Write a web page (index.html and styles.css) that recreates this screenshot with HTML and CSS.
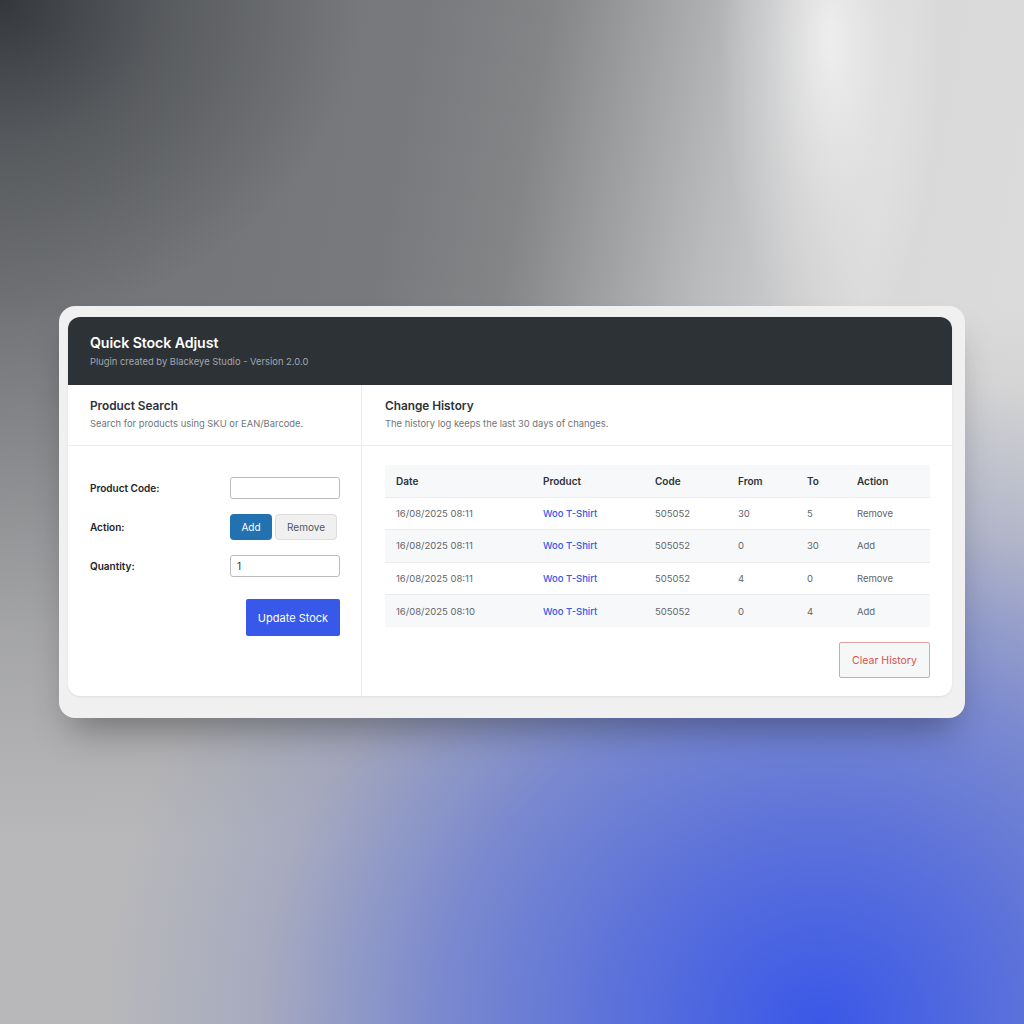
FILE: index.html
```html
<!DOCTYPE html>
<html lang="en">
<head>
<meta charset="utf-8">
<title>Quick Stock Adjust</title>
<link rel="stylesheet" href="styles.css">
</head>
<body>
<div class="page">
  <div class="frame">
    <div class="card">
      <header class="app-header">
        <h1 class="app-title">Quick Stock Adjust</h1>
        <p class="app-sub">Plugin created by Blackeye Studio - Version 2.0.0</p>
      </header>
      <div class="panels">
        <div class="sec-head left">
          <h2 class="sec-title">Product Search</h2>
          <p class="sec-desc">Search for products using SKU or EAN/Barcode.</p>
        </div>
        <div class="sec-head">
          <h2 class="sec-title">Change History</h2>
          <p class="sec-desc">The history log keeps the last 30 days of changes.</p>
        </div>
        <div class="sec-body left">
          <div class="form">
            <label class="lbl">Product Code:</label>
            <input class="inp" type="text" value="">
            <span class="lbl">Action:</span>
            <div class="toggle">
              <button class="btn-add">Add</button>
              <button class="btn-remove">Remove</button>
            </div>
            <label class="lbl">Quantity:</label>
            <input class="inp" type="text" value="1">
          </div>
          <div class="submit-row">
            <button class="btn-update">Update Stock</button>
          </div>
        </div>
        <div class="sec-body right">
          <table class="hist">
            <thead>
              <tr><th class="c-date">Date</th><th class="c-prod">Product</th><th class="c-code">Code</th><th class="c-from">From</th><th class="c-to">To</th><th class="c-act">Action</th></tr>
            </thead>
            <tbody>
              <tr><td>16/08/2025 08:11</td><td><a class="plink">Woo T-Shirt</a></td><td>505052</td><td>30</td><td>5</td><td>Remove</td></tr>
              <tr class="alt"><td>16/08/2025 08:11</td><td><a class="plink">Woo T-Shirt</a></td><td>505052</td><td>0</td><td>30</td><td>Add</td></tr>
              <tr><td>16/08/2025 08:11</td><td><a class="plink">Woo T-Shirt</a></td><td>505052</td><td>4</td><td>0</td><td>Remove</td></tr>
              <tr class="alt"><td>16/08/2025 08:10</td><td><a class="plink">Woo T-Shirt</a></td><td>505052</td><td>0</td><td>4</td><td>Add</td></tr>
            </tbody>
          </table>
          <div class="clear-row">
            <button class="btn-clear">Clear History</button>
          </div>
        </div>
      </div>
    </div>
  </div>
</div>
</body>
</html>
```

FILE: styles.css
```css
* { box-sizing: border-box; }
html, body { margin: 0; padding: 0; }
body {
  font-family: Inter, "Noto Sans", "Liberation Sans", sans-serif;
  width: 1024px;
  height: 1024px;
  overflow: hidden;
}
.page {
  width: 1024px;
  height: 1024px;
  padding: 306px 0 0 59px;
  background:
    radial-gradient(ellipse 720px 660px at 820px 1024px, rgba(58,88,232,1) 0%, rgba(82,106,222,0.95) 25%, rgba(100,120,214,0.75) 52%, rgba(128,140,202,0.3) 78%, rgba(140,145,195,0) 100%),
    radial-gradient(ellipse 110px 320px at 830px 40px, rgba(250,250,250,0.75) 0%, rgba(245,245,245,0.3) 55%, rgba(240,240,240,0) 100%),
    linear-gradient(to bottom, rgba(182,182,184,0) 30%, rgba(182,182,184,0.75) 62%, rgba(184,184,186,1) 82%),
    radial-gradient(ellipse 360px 320px at 0px 0px, rgba(52,56,60,1) 0%, rgba(70,73,77,0.6) 45%, rgba(110,112,115,0) 100%),
    linear-gradient(100deg, #707275 0%, #78797c 35%, #848587 46%, #b9babc 62%, #d9d9d9 76%, #dcdcdc 100%);
}
.frame {
  width: 906px;
  background: #f0f0f0;
  border-radius: 16px;
  padding: 11px 13px 22px 9px;
  box-shadow: 0 22px 36px -12px rgba(0,0,0,0.35);
}
.card {
  background: #ffffff;
  border-radius: 12px;
  overflow: hidden;
  box-shadow: 0 1px 2px rgba(0,0,0,0.08);
}
.app-header {
  background: #2d3237;
  height: 68px;
  padding: 17px 22px 0;
}
.app-title {
  margin: 0;
  color: #ffffff;
  font-size: 14.2px;
  font-weight: 600;
  line-height: 18px;
  letter-spacing: -0.1px;
}
.app-sub {
  margin: 3px 0 0;
  color: #a3a7ab;
  font-size: 9.4px;
  line-height: 13px;
}
.panels {
  display: grid;
  grid-template-columns: 294px 1fr;
}
.left { border-right: 1px solid #ececec; }
.sec-head {
  height: 61px;
  padding: 14px 22px 0;
  border-bottom: 1px solid #ededed;
}
.sec-head:not(.left) { padding-left: 23px; }
.sec-title {
  margin: 0;
  font-size: 11.8px;
  font-weight: 600;
  color: #2c3338;
  line-height: 15px;
}
.sec-desc {
  margin: 3px 0 0;
  font-size: 9.4px;
  color: #70757a;
  line-height: 13px;
}
.sec-body.left {
  padding: 31px 21px 0 22px;
}
.form {
  display: grid;
  grid-template-columns: 140px 110px;
  row-gap: 15px;
  align-items: center;
}
.lbl {
  font-size: 10px;
  font-weight: 600;
  color: #1d2327;
}
.inp {
  width: 110px;
  height: 22px;
  border: 1px solid #b9bcbf;
  border-radius: 3px;
  padding: 0 6px;
  font-family: inherit;
  font-size: 10px;
  color: #2c3338;
  background: #fff;
}
.toggle {
  display: flex;
  gap: 3px;
}
.btn-add, .btn-remove, .btn-update, .btn-clear {
  font-family: inherit;
  cursor: pointer;
}
.btn-add {
  width: 42px;
  height: 26px;
  border: none;
  border-radius: 4px;
  background: #2271b1;
  color: #ffffff;
  font-size: 10px;
}
.btn-remove {
  width: 62px;
  height: 26px;
  border: 1px solid #dcdcde;
  border-radius: 4px;
  background: #f0f0f1;
  color: #50575e;
  font-size: 10px;
}
.submit-row {
  display: flex;
  justify-content: flex-end;
  margin-top: 22px;
}
.btn-update {
  width: 94px;
  height: 37px;
  border: none;
  border-radius: 2px;
  background: #3858e9;
  color: #ffffff;
  font-size: 11px;
}
.sec-body.right {
  padding: 19px 22px 18px 23px;
}
.hist {
  width: 545px;
  border-collapse: collapse;
  font-size: 9.5px;
}
.hist th {
  height: 32px;
  text-align: left;
  font-weight: 600;
  font-size: 10px;
  color: #2c3338;
  background: #f7f8f9;
  padding: 0 11px;
  border-bottom: 1px solid #ececec;
}
.hist td {
  height: 32.5px;
  padding: 0 11px;
  color: #5f666c;
  border-bottom: 1px solid #ececec;
}
.hist tbody tr:last-child td { border-bottom: none; }
.hist tr.alt td { background: #f7f8f9; }
.c-date { width: 147px; }
.c-prod { width: 112px; }
.c-code { width: 83px; }
.c-from { width: 69px; }
.c-to { width: 50px; }
.plink {
  color: #3858e9;
  font-weight: 500;
  text-decoration: none;
}
.clear-row {
  display: flex;
  justify-content: flex-end;
  margin-top: 15px;
}
.btn-clear {
  width: 91px;
  height: 36px;
  border: 1px solid #e3a1a2;
  border-radius: 2px;
  background: #f6f7f7;
  color: #d94f4f;
  font-size: 10.5px;
}
```
